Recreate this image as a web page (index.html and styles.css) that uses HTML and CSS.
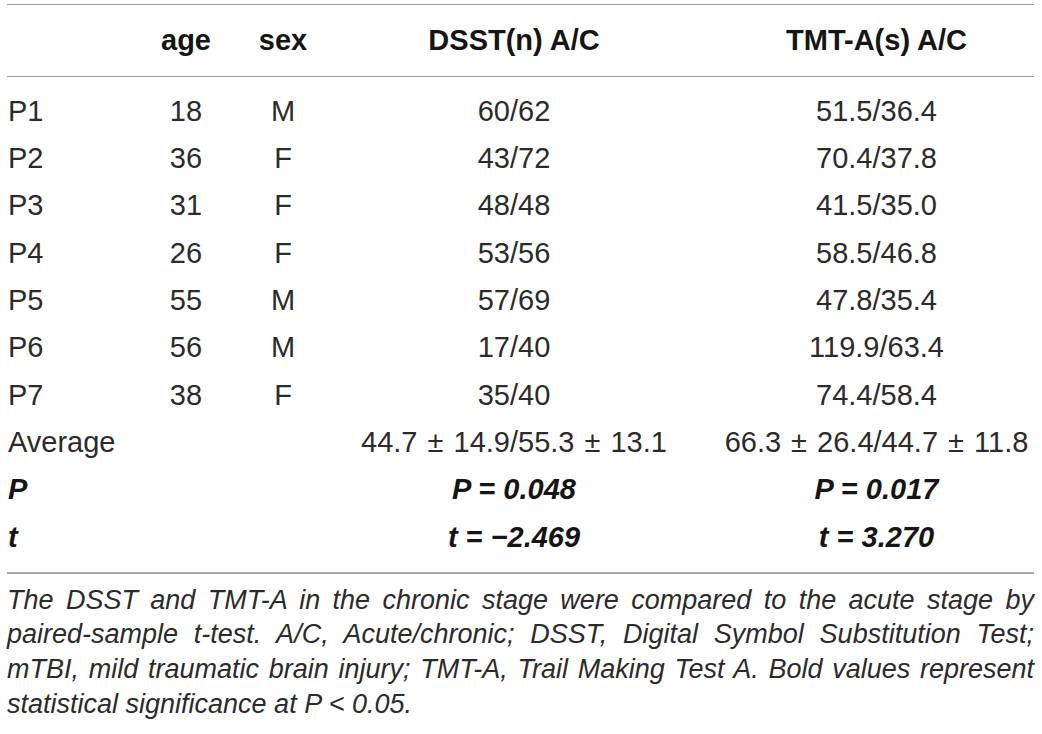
FILE: index.html
```html
<!DOCTYPE html>
<html>
<head>
<meta charset="utf-8">
<link rel="stylesheet" href="styles.css">
</head>
<body>
<div class="page">
  <div class="table">
    <div class="row head">
      <div class="c1"></div>
      <div class="c2">age</div>
      <div class="c3">sex</div>
      <div class="c4">DSST(n) A/C</div>
      <div class="c5">TMT-A(s) A/C</div>
    </div>
    <div class="body">
      <div class="row"><div class="c1">P1</div><div class="c2">18</div><div class="c3">M</div><div class="c4">60/62</div><div class="c5">51.5/36.4</div></div>
      <div class="row"><div class="c1">P2</div><div class="c2">36</div><div class="c3">F</div><div class="c4">43/72</div><div class="c5">70.4/37.8</div></div>
      <div class="row"><div class="c1">P3</div><div class="c2">31</div><div class="c3">F</div><div class="c4">48/48</div><div class="c5">41.5/35.0</div></div>
      <div class="row"><div class="c1">P4</div><div class="c2">26</div><div class="c3">F</div><div class="c4">53/56</div><div class="c5">58.5/46.8</div></div>
      <div class="row"><div class="c1">P5</div><div class="c2">55</div><div class="c3">M</div><div class="c4">57/69</div><div class="c5">47.8/35.4</div></div>
      <div class="row"><div class="c1">P6</div><div class="c2">56</div><div class="c3">M</div><div class="c4">17/40</div><div class="c5">119.9/63.4</div></div>
      <div class="row"><div class="c1">P7</div><div class="c2">38</div><div class="c3">F</div><div class="c4">35/40</div><div class="c5">74.4/58.4</div></div>
      <div class="row avg"><div class="c1">Average</div><div class="c2"></div><div class="c3"></div><div class="c4">44.7 ± 14.9/55.3 ± 13.1</div><div class="c5">66.3 ± 26.4/44.7 ± 11.8</div></div>
      <div class="row sig"><div class="c1">P</div><div class="c2"></div><div class="c3"></div><div class="c4">P = 0.048</div><div class="c5">P = 0.017</div></div>
      <div class="row sig"><div class="c1">t</div><div class="c2"></div><div class="c3"></div><div class="c4">t = −2.469</div><div class="c5">t = 3.270</div></div>
    </div>
  </div>
  <p class="caption">The DSST and TMT-A in the chronic stage were compared to the acute stage by paired-sample t-test. A/C, Acute/chronic; DSST, Digital Symbol Substitution Test; mTBI, mild traumatic brain injury; TMT-A, Trail Making Test A. Bold values represent statistical significance at P &lt; 0.05.</p>
</div>
</body>
</html>
```

FILE: styles.css
```css
html, body {
  margin: 0;
  padding: 0;
  background: #ffffff;
}

body {
  font-family: "Liberation Sans", Arial, sans-serif;
  color: #2b2b2b;
}

.page {
  padding: 4px 8px 0 7px;
  width: 1027px;
}

.table {
  width: 1027px;
}

.row {
  display: grid;
  grid-template-columns: 108px 142px 52px 410px 315px;
  align-items: center;
  height: 47.33px;
  font-size: 29px;
  white-space: nowrap;
}

.row > div {
  text-align: center;
}

.row > .c1 {
  text-align: left;
  padding-left: 1px;
}

.avg .c4,
.avg .c5 {
  word-spacing: 2px;
}

.head {
  height: 71px;
  border-top: 1px solid #9a9a9a;
  border-bottom: 1px solid #9a9a9a;
  font-weight: bold;
  font-size: 29px;
  color: #151515;
}

.body {
  padding: 10.5px 0 11px;
  border-bottom: 2px solid #a8a8a8;
}

.sig {
  font-weight: bold;
  font-style: italic;
  color: #151515;
}

.caption {
  margin: 9px 0 0;
  font-size: 27px;
  line-height: 34.6px;
  font-style: italic;
  text-align: justify;
  color: #2b2b2b;
}
```
